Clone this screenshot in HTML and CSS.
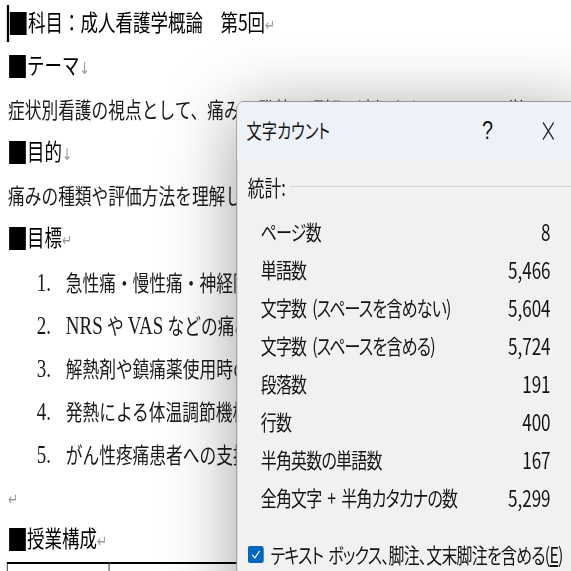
FILE: index.html
```html
<!DOCTYPE html>
<html lang="ja">
<head>
  <meta charset="utf-8">
  <title>成人看護学概論 第5回 - 文字カウント</title>
  <link rel="stylesheet" href="styles.css">
</head>
<body>
  <div class="screen">
    <div class="document">
      <p class="heading"><span class="caret"></span><span class="sq">■</span>科目：成人看護学概論　第5回<span class="mark">↵</span></p>
      <p class="heading"><span class="sq">■</span>テーマ<span class="mark">↓</span></p>
      <p>症状別看護の視点として、痛みと発熱の理解と適切なケアについて学ぶ</p>
      <p class="heading"><span class="sq">■</span>目的<span class="mark">↓</span></p>
      <p>痛みの種類や評価方法を理解し、発熱時の看護について説明できる</p>
      <p class="heading"><span class="sq">■</span>目標<span class="mark">↵</span></p>
      <p class="item"><span class="num">1.</span>急性痛・慢性痛・神経障害性疼痛の違いを説明できる</p>
      <p class="item"><span class="num">2.</span><span class="latin">NRS</span> や <span class="latin">VAS</span> などの痛みの評価スケールを理解できる</p>
      <p class="item"><span class="num">3.</span>解熱剤や鎮痛薬使用時の看護を説明できる</p>
      <p class="item"><span class="num">4.</span>発熱による体温調節機構を説明できる</p>
      <p class="item"><span class="num">5.</span>がん性疼痛患者への支援を考えられる</p>
      <p><span class="mark">↵</span></p>
      <p class="heading"><span class="sq">■</span>授業構成<span class="mark">↵</span></p>
      <table class="plan">
        <tr>
          <td class="plan-time"></td>
          <td></td>
        </tr>
      </table>
    </div>

    <div class="dialog">
      <div class="dialog-titlebar">
        <div class="dialog-title">文字カウント</div>
        <div class="title-button">?</div>
        <div class="title-button">
          <svg width="17" height="20" viewBox="0 0 17 20">
            <path d="M1.5 1.5 L15.5 18.5 M15.5 1.5 L1.5 18.5" stroke="#1a1a1a" stroke-width="1.4" fill="none"/>
          </svg>
        </div>
      </div>
      <div class="dialog-body">
        <div class="stats-header">
          <span>統計:</span>
          <span class="stats-rule"></span>
        </div>
        <div class="stats">
          <div class="stat"><span>ページ数</span><span class="stat-value">8</span></div>
          <div class="stat"><span>単語数</span><span class="stat-value">5,466</span></div>
          <div class="stat"><span>文字数 (スペースを含めない)</span><span class="stat-value">5,604</span></div>
          <div class="stat"><span>文字数 (スペースを含める)</span><span class="stat-value">5,724</span></div>
          <div class="stat"><span>段落数</span><span class="stat-value">191</span></div>
          <div class="stat"><span>行数</span><span class="stat-value">400</span></div>
          <div class="stat"><span>半角英数の単語数</span><span class="stat-value">167</span></div>
          <div class="stat"><span>全角文字 + 半角カタカナの数</span><span class="stat-value">5,299</span></div>
        </div>
        <div class="option">
          <span class="checkbox">
            <svg width="21" height="17" viewBox="0 0 21 17">
              <path d="M6 8.8 L9.3 12 L15.5 5" stroke="#fff" stroke-width="1.4" fill="none"/>
            </svg>
          </span>
          <span>テキスト ボックス、脚注、文末脚注を含める(<u>E</u>)</span>
        </div>
      </div>
    </div>
  </div>
</body>
</html>
```

FILE: styles.css
```css
html, body {
  margin: 0;
  width: 571px;
  height: 571px;
  overflow: hidden;
  background: #fff;
}

/* the capture is squeezed horizontally, so the whole screen is drawn wide and scaled */
.screen {
  position: relative;
  width: 752px;
  height: 571px;
  transform: scaleX(0.76);
  transform-origin: 0 0;
}

.document {
  padding: 2.5px 0 0 10.5px;
  font-family: "Liberation Serif", "Noto Sans CJK JP", serif;
  font-size: 22px;
  line-height: 43px;
  color: #1a1a1a;
  white-space: nowrap;
}
.document p {
  margin: 0;
  height: 43px;
}
.heading {
  font-family: "Noto Sans CJK JP", sans-serif;
  font-size: 23px;
  line-height: 37px;
  color: #000;
}
.sq {
  display: inline-block;
  width: 22px;
  height: 23px;
  margin: 0 2px 0 1px;
  overflow: hidden;
  color: transparent;
  background: #000;
  font-size: 10px;
  line-height: 23px;
  vertical-align: -4px;
}
.caret {
  display: inline-block;
  width: 3px;
  height: 37px;
  margin-left: -1.5px;
  background: #000;
  vertical-align: -11px;
}
.mark {
  font-family: "DejaVu Sans", sans-serif;
  font-size: 16px;
  color: #9a9a9a;
}
.item {
  padding-left: 38px;
}
.num {
  display: inline-block;
  width: 38px;
  font-size: 25px;
}
.latin {
  font-size: 25px;
}
.plan {
  margin-left: -1.5px;
  border-collapse: collapse;
  width: 400px;
}
.plan td {
  height: 40px;
  border-top: 2px solid #000;
  border-left: 1.5px solid #000;
  padding: 0;
}
.plan td.plan-time {
  width: 133px;
}

.dialog {
  position: absolute;
  left: 310.5px;
  top: 101px;
  width: 460px;
  height: 520px;
  background: #f1f1f1;
  border: 1px solid #8e8e8e;
  border-radius: 9px 9px 0 0;
  box-shadow: 0 10px 80px rgba(0, 0, 0, 0.38);
  font-family: "Noto Sans CJK JP", sans-serif;
  font-feature-settings: "palt";
  color: #141414;
  overflow: hidden;
}
.dialog-titlebar {
  display: flex;
  align-items: center;
  height: 57px;
  padding-right: 20px;
  gap: 20px;
  background: #edf2f9;
}
.dialog-title {
  flex: 1;
  padding-left: 13px;
  font-size: 20px;
}
.title-button {
  display: flex;
  align-items: center;
  justify-content: center;
  width: 60px;
  font-family: "Liberation Sans", sans-serif;
  font-size: 26px;
  font-weight: 300;
}
.dialog-body {
  padding: 12px 0 0 14.5px;
  font-size: 21px;
}
.stats-header {
  display: flex;
  align-items: center;
  height: 30px;
  line-height: 30px;
  font-size: 22px;
}
.stats-rule {
  flex: 1;
  height: 1px;
  margin-left: 6px;
  background: #d4d4d4;
}
.stats {
  margin: 11px 47px 0 17px;
  letter-spacing: -1px;
  word-spacing: 4px;
}
.stat {
  display: flex;
  justify-content: space-between;
  height: 38px;
  line-height: 38px;
}
.stat-value {
  font-size: 22.5px;
  letter-spacing: 0;
}
.option {
  display: flex;
  align-items: center;
  gap: 9px;
  margin-top: 23px;
  height: 30px;
  letter-spacing: -1px;
  word-spacing: 3px;
  white-space: nowrap;
}
.checkbox {
  display: flex;
  width: 21px;
  height: 17px;
  border-radius: 3px;
  background: #0067c0;
}
```
